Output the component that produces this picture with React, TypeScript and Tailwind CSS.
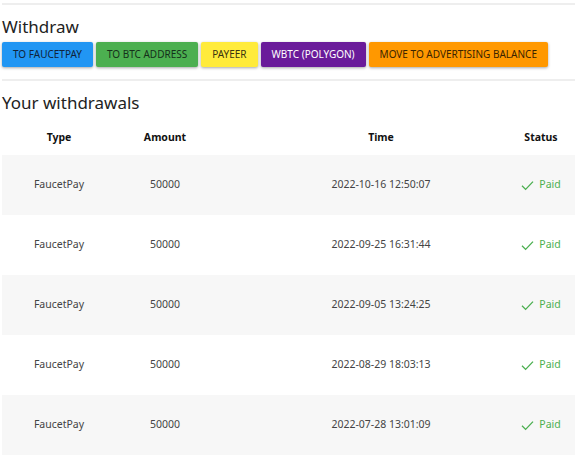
const withdrawButtons = [
  { label: 'To FaucetPay', cls: 'bg-[#2196f3] text-[#10233a]' },
  { label: 'To BTC address', cls: 'bg-[#4caf50] text-[#15301a]' },
  { label: 'Payeer', cls: 'bg-[#ffeb3b] text-[#3a3410]' },
  { label: 'WBTC (Polygon)', cls: 'bg-[#6a1b9a] text-white' },
  { label: 'Move to advertising balance', cls: 'bg-[#ff9800] text-[#3a2400]' },
]

const withdrawals = [
  { type: 'FaucetPay', amount: '50000', time: '2022-10-16 12:50:07' },
  { type: 'FaucetPay', amount: '50000', time: '2022-09-25 16:31:44' },
  { type: 'FaucetPay', amount: '50000', time: '2022-09-05 13:24:25' },
  { type: 'FaucetPay', amount: '50000', time: '2022-08-29 18:03:13' },
  { type: 'FaucetPay', amount: '50000', time: '2022-07-28 13:01:09' },
]

function CheckIcon() {
  return (
    <svg width="13" height="11" viewBox="0 0 13 11" fill="none">
      <path d="M1 5.8 L4.6 9.4 L12 1.6" stroke="#4caf50" strokeWidth="1.3" />
    </svg>
  )
}

export default function App() {
  return (
    <div
      className="min-h-screen bg-white px-[2px] pt-[3px] text-[#333]"
      style={{ fontFamily: '"Segoe UI", "Noto Sans", sans-serif' }}
    >
      <hr className="border-t-2 border-[#eeeeee]" />
      <h2 className="mt-[9px] text-[17px] leading-[26px] text-[#222]">Withdraw</h2>

      {/* Buttons */}
      <div className="mt-[2px] flex gap-[3px]">
        {withdrawButtons.map((b) => (
          <button
            key={b.label}
            type="button"
            className={`h-[25px] rounded-[2px] px-[11px] text-[10px] uppercase shadow-[0_1px_3px_rgba(0,0,0,0.35)] ${b.cls}`}
          >
            {b.label}
          </button>
        ))}
      </div>

      <hr className="mt-[12px] border-t-2 border-[#eeeeee]" />
      <h2 className="mt-[9px] text-[17px] leading-[26px] text-[#222]">Your withdrawals</h2>

      {/* Table */}
      <div className="mt-[4px] text-[10.5px]">
        <div className="grid h-[35px] grid-cols-[114px_98px_1fr_68px] items-center font-bold text-[#111]">
          <div className="text-center">Type</div>
          <div className="text-center">Amount</div>
          <div className="pl-[41px] text-center">Time</div>
          <div className="text-center">Status</div>
        </div>
        {withdrawals.map((w, i) => (
          <div
            key={w.time}
            className={`grid h-[60px] grid-cols-[114px_98px_1fr_68px] items-center text-[#444] ${
              i % 2 === 0 ? 'bg-[#f7f7f7]' : 'bg-white'
            }`}
          >
            <div className="text-center">{w.type}</div>
            <div className="text-center">{w.amount}</div>
            <div className="pl-[41px] text-center">{w.time}</div>
            <div className="flex items-center justify-center gap-[5px] text-[#4caf50]">
              <CheckIcon />
              <span>Paid</span>
            </div>
          </div>
        ))}
      </div>
    </div>
  )
}
